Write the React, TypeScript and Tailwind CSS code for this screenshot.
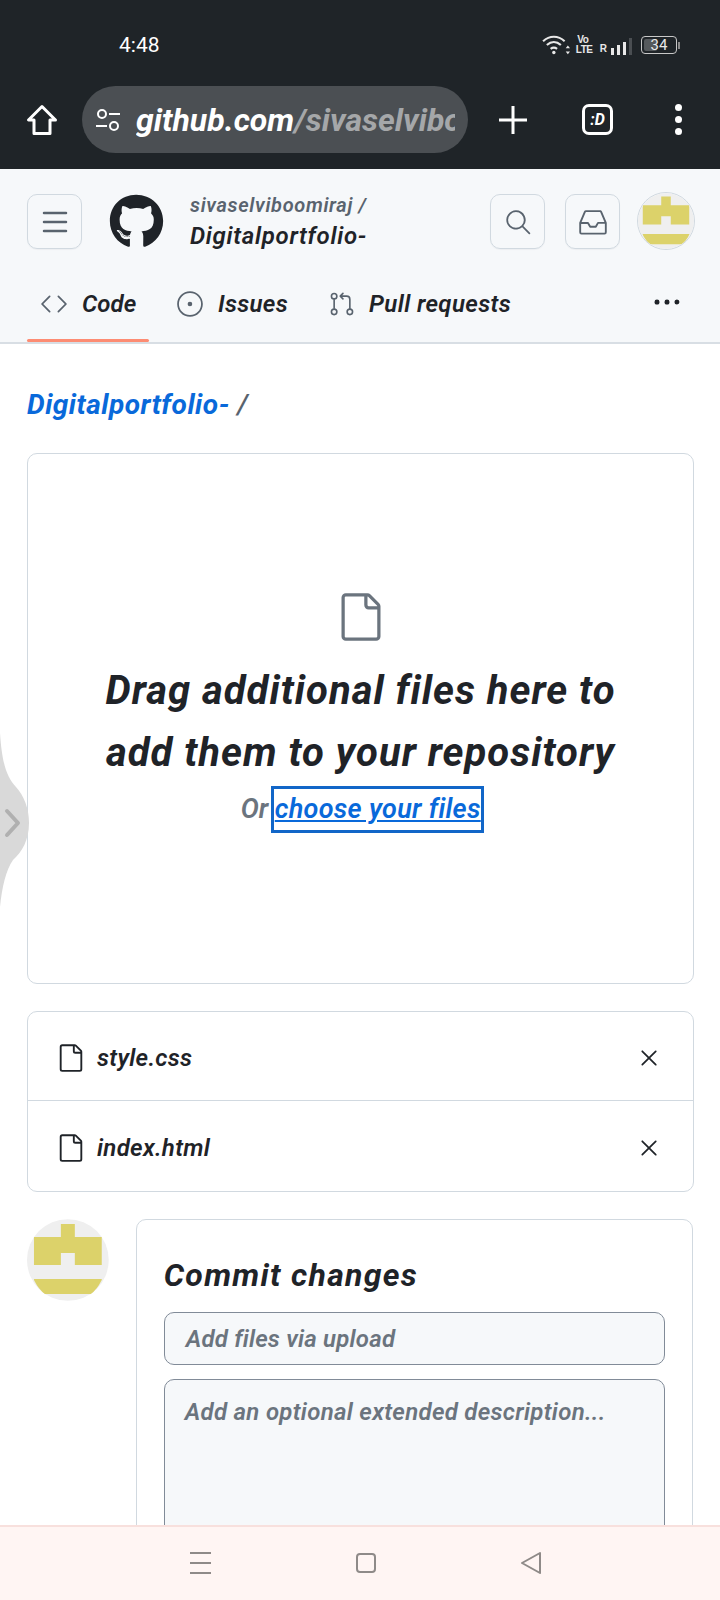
import React from 'react';
import { GoSearch, GoInbox, GoCode, GoIssueOpened, GoGitPullRequest, GoKebabHorizontal, GoFile, GoX } from 'react-icons/go';
import { FaGithub } from 'react-icons/fa';

const font = 'font-["Roboto",sans-serif] italic';

function IconButton({ children }: { children: React.ReactNode }) {
  return (
    <div className="w-[55px] h-[55px] rounded-[10px] border border-[#d1d9e0] flex items-center justify-center text-[#59636e] shadow-[0_1px_1px_rgba(31,35,40,0.04)]">
      {children}
    </div>
  );
}

function Identicon({ size, className }: { size: number; className?: string }) {
  return (
    <svg width={size} height={size} viewBox="0 0 82 82" className={className}>
      <circle cx="41" cy="41" r="41" fill="#efefef" />
      <path d="M34 5h14v13h27v28H48V34H34v12H7V18h27z" fill="#dcd26a" />
      <path d="M7 60h68v1q-5 10-11 14H18q-6-4-11-14z" fill="#dcd26a" />
    </svg>
  );
}

function StatusIcons() {
  return (
    <div className="flex items-center not-italic text-[#e8e8e8]">
      <svg width="28" height="22" viewBox="0 0 26 20" fill="none" stroke="currentColor" strokeWidth="2">
        <path d="M1 6.5c6-5.5 14-5.5 20 0" />
        <path d="M4.5 10c4-3.5 9-3.5 13 0" />
        <path d="M8 13.5c2-1.5 4-1.5 6 0" />
        <circle cx="11" cy="17" r="1.6" fill="currentColor" stroke="none" />
        <path d="M22 13l2-2.5 2 2.5zM22 16h4l-2 2.5z" fill="currentColor" stroke="none" />
      </svg>
      <div className="ml-[6px] flex flex-col font-['Liberation_Sans',sans-serif] font-bold text-[10px] leading-[10px] text-center tracking-[-0.5px] w-[14px]">
        <span>Vo</span>
        <span>LTE</span>
      </div>
      <span className="ml-[10px] mt-[7px] font-['Liberation_Sans',sans-serif] font-bold text-[10px] leading-[10px]">R</span>
      <div className="ml-[4px] flex items-end gap-[3px] h-[20px]">
        <span className="w-[3px] h-[7px] bg-[#e8e8e8]" />
        <span className="w-[3px] h-[10px] bg-[#e8e8e8]" />
        <span className="w-[3px] h-[13px] bg-[#e8e8e8]" />
        <span className="w-[3px] h-[17px] bg-[#4a4e52]" />
      </div>
      <div className="ml-[9px] w-[36px] h-[18px] rounded-[4px] border border-[#c8c8c8] relative flex items-center justify-center text-[15px] font-['Roboto',sans-serif]">
        <div className="absolute left-[2px] top-[2px] bottom-[2px] w-[13px] rounded-[2px] bg-[#55595c]" />
        <span className="relative">34</span>
      </div>
      <span className="ml-[1px] w-[2px] h-[7px] bg-[#8a8a8a]" />
    </div>
  );
}

function FileRow({ name, last }: { name: string; last?: boolean }) {
  return (
    <div className={`flex items-center pl-[28px] pr-[30px] pt-[3px] ${last ? 'h-[90px]' : 'h-[89px] border-b border-[#d1d9e0]'}`}>
      <GoFile size={30} className="text-[#1f2328]" />
      <span className={`${font} ml-[11px] font-semibold text-[24px] tracking-[0.3px] text-[#1f2328]`}>{name}</span>
      <GoX size={28} className="ml-auto text-[#1f2328]" />
    </div>
  );
}

export default function App() {
  return (
    <div className={`relative w-[720px] h-[1600px] overflow-hidden bg-white ${font}`}>
      <div className="h-[169px] bg-[#1f2428] flex flex-col">
        <div className="h-[86px] pl-[119px] pr-[40px] pt-[34px] flex justify-between items-start">
          <span className="not-italic font-['Roboto',sans-serif] text-[21px] leading-[22px] text-white">4:48</span>
          <StatusIcons />
        </div>
        <div className="h-[67px] flex items-center pl-[26px]">
          <svg width="32" height="32" viewBox="0 0 32 32" fill="none" stroke="white" strokeWidth="3" strokeLinejoin="round">
            <path d="M16 2.5L2.5 16H8v13.5h16V16h5.5z" />
          </svg>
          <div className="ml-[24px] w-[386px] h-[67px] rounded-[34px] bg-[#4b4f53] flex items-center pl-[13px] pr-[13px] overflow-hidden">
            <svg width="26" height="26" viewBox="0 0 26 26" fill="none" stroke="white" strokeWidth="2" className="shrink-0">
              <circle cx="7" cy="7" r="4" />
              <path d="M14 7h11M1 19h11" />
              <circle cx="19" cy="19" r="4" />
            </svg>
            <span className="ml-[15px] text-[32px] font-bold whitespace-nowrap overflow-hidden text-white">
              github.com<span className="text-[#a5a7a9]">/sivaselviboomiraj</span>
            </span>
          </div>
          <svg width="30" height="30" viewBox="0 0 30 30" stroke="white" strokeWidth="3" className="ml-[30px]">
            <path d="M15 1v28M1 15h28" />
          </svg>
          <div className="ml-[54px] w-[31px] h-[31px] rounded-[7px] border-[3px] border-white flex items-center justify-center text-white text-[16px] font-bold">:D</div>
          <div className="ml-[62px] flex flex-col gap-[5px]">
            <span className="w-[7px] h-[7px] rounded-full bg-white" />
            <span className="w-[7px] h-[7px] rounded-full bg-white" />
            <span className="w-[7px] h-[7px] rounded-full bg-white" />
          </div>
        </div>
      </div>

      <div className="h-[175px] bg-[#f6f8fa] border-b-2 border-[#d8dee4] px-[27px]">
        <div className="h-[97px] pt-[25px] flex items-start">
          <IconButton>
            <svg width="26" height="22" viewBox="0 0 26 22" stroke="#59636e" strokeWidth="2.5" strokeLinecap="round">
              <path d="M2 2h22M2 11h22M2 20h22" />
            </svg>
          </IconButton>
          <FaGithub size={55} className="ml-[27px] text-[#1f2328]" />
          <div className="ml-[26px] flex flex-col mt-[-1px]">
            <span className="text-[20px] leading-[24px] font-semibold tracking-[0.65px] text-[#59636e]">sivaselviboomiraj /</span>
            <span className="mt-[5px] text-[24px] leading-[28px] font-semibold tracking-[0.7px] text-[#1f2328]">Digitalportfolio-</span>
          </div>
          <div className="ml-auto flex items-start gap-[20px]">
            <IconButton><GoSearch size={28} /></IconButton>
            <IconButton><GoInbox size={30} /></IconButton>
          </div>
          <Identicon size={58} className="ml-[17px] mt-[-2px] mr-[-2px] rounded-full border border-[#d1d9e0]" />
        </div>
        <div className="relative flex items-center h-[76px] pb-[1px]">
          <div className="flex items-center w-[122px] pl-[13px] h-full relative">
            <GoCode size={28} className="text-[#59636e]" />
            <span className="ml-[14px] text-[24px] font-semibold tracking-[0.1px] text-[#1f2328]">Code</span>
            <div className="absolute left-0 right-0 bottom-[-1px] h-[3px] rounded-sm bg-[#fd8c73]" />
          </div>
          <GoIssueOpened size={28} className="ml-[27px] text-[#59636e]" />
          <span className="ml-[14px] text-[24px] font-semibold tracking-[0.3px] text-[#1f2328]">Issues</span>
          <GoGitPullRequest size={26} className="ml-[41px] text-[#59636e]" />
          <span className="ml-[14px] text-[24px] font-semibold tracking-[0.4px] text-[#1f2328]">Pull requests</span>
          <GoKebabHorizontal size={30} className="ml-auto mr-[11px] mt-[-4px] text-[#1f2328]" />
        </div>
      </div>

      <div className="px-[27px]">
        <div className="h-[109px] pt-[42px] text-[28px] leading-[38px] font-bold tracking-[0.5px]">
          <span className="text-[#0969da]">Digitalportfolio-</span>
          <span className="text-[#59636e] font-medium"> /</span>
        </div>

        <div className="h-[531px] w-[667px] rounded-[10px] border border-[#d1d9e0] flex flex-col items-center pt-[137px]">
          <GoFile size={52} className="text-[#6b747e]" />
          <h2 className="mt-[17px] text-[40px] leading-[62px] font-bold tracking-[1px] text-center text-[#1f2328]">
            Drag additional files here to<br />add them to your repository
          </h2>
          <div className="mt-[2px] ml-[4px] flex items-center text-[27px] font-semibold text-[#6b747e]">
            <span className="mr-[3px]">Or</span>
            <span className="border-[3px] border-[#1166c8] h-[47px] w-[213px] flex items-center justify-center tracking-[0.3px] text-[#0969da] underline">choose your files</span>
          </div>
        </div>

        <div className="mt-[27px] w-[667px] rounded-[10px] border border-[#d1d9e0]">
          <FileRow name="style.css" />
          <FileRow name="index.html" last />
        </div>

        <div className="mt-[27px] flex items-start">
          <Identicon size={82} />
          <div className="ml-[27px] w-[559px] h-[400px] rounded-[10px] border border-[#d1d9e0] px-[27px]">
            <h3 className="mt-[33px] text-[32px] leading-[44px] font-bold tracking-[1.3px] text-[#1f2328]">Commit changes</h3>
            <div className="mt-[15px] h-[53px] rounded-[10px] border border-[#818b98] bg-[#f6f8fa] flex items-center pl-[21px] text-[24px] font-semibold tracking-[0.2px] text-[#6b747e]">Add files via upload</div>
            <div className="mt-[14px] h-[300px] rounded-[10px] border border-[#818b98] bg-[#f6f8fa] pl-[20px] pt-[16px] text-[24px] leading-[32px] font-semibold tracking-[0.3px] text-[#6b747e]">Add an optional extended description...</div>
          </div>
        </div>
      </div>

      {/* system nav bar */}
      <div className="absolute left-0 right-0 bottom-0 h-[75px] bg-[#fff5f3] border-t-2 border-[#f8e0dd] flex items-center pl-[190px] pb-[2px]">
        <svg width="21" height="26" viewBox="0 0 21 26" stroke="#8f8a88" strokeWidth="2">
          <path d="M0 3h21M0 13h21M0 23h21" />
        </svg>
        <div className="ml-[145px] w-[20px] h-[20px] rounded-[4px] border-2 border-[#8f8a88]" />
        <svg width="22" height="24" viewBox="0 0 22 24" fill="none" stroke="#8f8a88" strokeWidth="2" strokeLinejoin="round" className="ml-[144px]">
          <path d="M20 2L2 12l18 10z" />
        </svg>
      </div>

      {/* edge gesture handle */}
      <svg width="32" height="200" viewBox="0 0 32 200" className="absolute left-0 top-[722px]">
        <path d="M0 11C2 40 6 54 16 65C24 74 29 86 29 101C29 118 22 130 13 138C6 148 2 165 0 185z" fill="#d9d9d9" />
        <path d="M7 89l11 12-11 12" fill="none" stroke="#b0b0b0" strokeWidth="4" strokeLinecap="round" strokeLinejoin="round" />
      </svg>
    </div>
  );
}
